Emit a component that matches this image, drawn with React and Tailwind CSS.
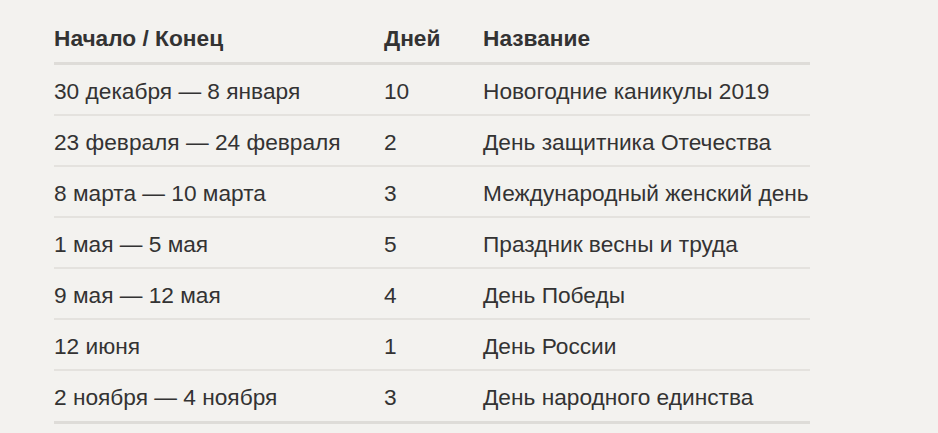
const rows = [
  ['30 декабря — 8 января', '10', 'Новогодние каникулы 2019'],
  ['23 февраля — 24 февраля', '2', 'День защитника Отечества'],
  ['8 марта — 10 марта', '3', 'Международный женский день'],
  ['1 мая — 5 мая', '5', 'Праздник весны и труда'],
  ['9 мая — 12 мая', '4', 'День Победы'],
  ['12 июня', '1', 'День России'],
  ['2 ноября — 4 ноября', '3', 'День народного единства'],
]

function App() {
  return (
    <div className="w-[938px] h-[433px] bg-[#f3f2ef] pt-[14px] pl-[54px] overflow-hidden" style={{ fontFamily: '"Liberation Sans", Arial, sans-serif' }}>
      <div className="w-[756px] text-[#333] text-[22.7px]">
        <div className="grid grid-cols-[330px_99px_1fr] h-[51px] items-center font-bold border-b-[3px] border-[#dedcd8]">
          <div>Начало / Конец</div>
          <div>Дней</div>
          <div>Название</div>
        </div>
        {rows.map((r, i) => (
          <div
            key={i}
            className={
              'grid grid-cols-[330px_99px_1fr] items-center pt-[3px] ' +
              (i === rows.length - 1 ? 'h-[53px] border-b-[3px] border-[#dedcd8]' : 'h-[51px] border-b-2 border-[#e4e2de]')
            }
          >
            <div>{r[0]}</div>
            <div>{r[1]}</div>
            <div className="whitespace-nowrap">{r[2]}</div>
          </div>
        ))}
      </div>
    </div>
  )
}

export default App
